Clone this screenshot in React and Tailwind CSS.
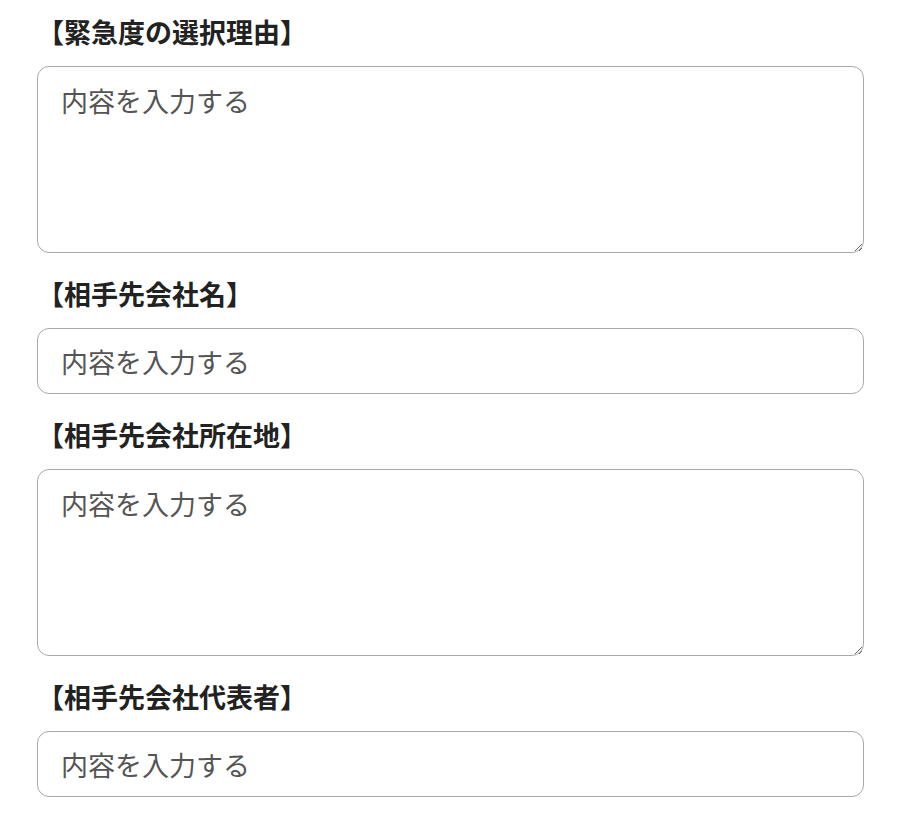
import React from 'react';

const fields = [
  { label: '【緊急度の選択理由】', multiline: true },
  { label: '【相手先会社名】', multiline: false },
  { label: '【相手先会社所在地】', multiline: true },
  { label: '【相手先会社代表者】', multiline: false },
];

const font = { fontFamily: '"Noto Sans CJK JP", "Noto Sans", sans-serif' };

export default function App() {
  return (
    <div className="min-h-screen bg-white pt-[14px] pl-[37px]" style={font}>
      <div className="w-[827px] flex flex-col">
        {fields.map((f, i) => (
          <div key={i} className={i > 0 ? 'mt-[23px]' : ''}>
            <label className="block text-[27px] leading-[36px] font-bold text-[#222] mb-[16px]">
              {f.label}
            </label>
            {f.multiline ? (
              <textarea
                placeholder="内容を入力する"
                className="block w-full h-[187px] rounded-[12px] border border-[#a9a9a9] pt-[16px] px-[23px] text-[27px] leading-[36px] text-[#333] placeholder:text-[#555] outline-none"
                style={font}
              />
            ) : (
              <input
                type="text"
                placeholder="内容を入力する"
                className="block w-full h-[66px] rounded-[12px] border border-[#a9a9a9] px-[23px] text-[27px] leading-[36px] text-[#333] placeholder:text-[#555] outline-none"
                style={font}
              />
            )}
          </div>
        ))}
      </div>
    </div>
  );
}
